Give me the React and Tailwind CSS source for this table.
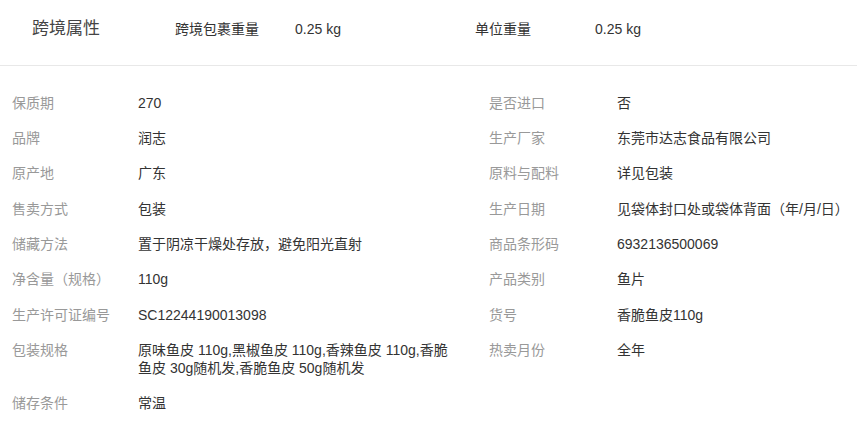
import React from 'react';

const leftRows = [
    ['保质期', '270'],
    ['品牌', '润志'],
    ['原产地', '广东'],
    ['售卖方式', '包装'],
    ['储藏方法', '置于阴凉干燥处存放，避免阳光直射'],
    ['净含量（规格）', '110g'],
    ['生产许可证编号', 'SC12244190013098'],
    ['包装规格', '原味鱼皮 110g,黑椒鱼皮 110g,香辣鱼皮 110g,香脆鱼皮 30g随机发,香脆鱼皮 50g随机发'],
    ['储存条件', '常温'],
];

const rightRows = [
    ['是否进口', '否'],
    ['生产厂家', '东莞市达志食品有限公司'],
    ['原料与配料', '详见包装'],
    ['生产日期', '见袋体封口处或袋体背面（年/月/日）'],
    ['商品条形码', '6932136500069'],
    ['产品类别', '鱼片'],
    ['货号', '香脆鱼皮110g'],
    ['热卖月份', '全年'],
];

const Row = ({ label, value, labelW, valueW }) => (
    <div className="flex py-[8.66px] leading-[18px]">
        <div className={`${labelW} shrink-0 text-[#999]`}>{label}</div>
        <div className={`${valueW} text-[#333]`}>{value}</div>
    </div>
);

const App = () => {
    return (
        <div
            className="w-[857px] h-[424px] bg-white overflow-hidden text-[14px]"
            style={{ fontFamily: '"Liberation Sans", Arial, "Noto Sans CJK SC", sans-serif' }}
        >
            <div className="flex items-center pt-[19px] pb-[26px] leading-[20px] border-b border-[#e8e8e8]">
                <div className="w-[175px] pl-[32px] text-[17px] text-[#444]">跨境属性</div>
                <div className="w-[120px] text-[#333]">跨境包裹重量</div>
                <div className="w-[180px] text-[#333]">0.25 kg</div>
                <div className="w-[120px] text-[#333]">单位重量</div>
                <div className="text-[#333]">0.25 kg</div>
            </div>

            <div className="flex pt-[19px]">
                <div className="w-[479px] pl-[12px]">
                    {leftRows.map(([l, v]) => (
                        <Row key={l} label={l} value={v} labelW="w-[126px]" valueW="w-[316px]" />
                    ))}
                </div>
                <div className="pl-[12px]">
                    {rightRows.map(([l, v]) => (
                        <Row key={l} label={l} value={v} labelW="w-[128px]" valueW="w-[240px]" />
                    ))}
                </div>
            </div>
        </div>
    );
};

export default App;
